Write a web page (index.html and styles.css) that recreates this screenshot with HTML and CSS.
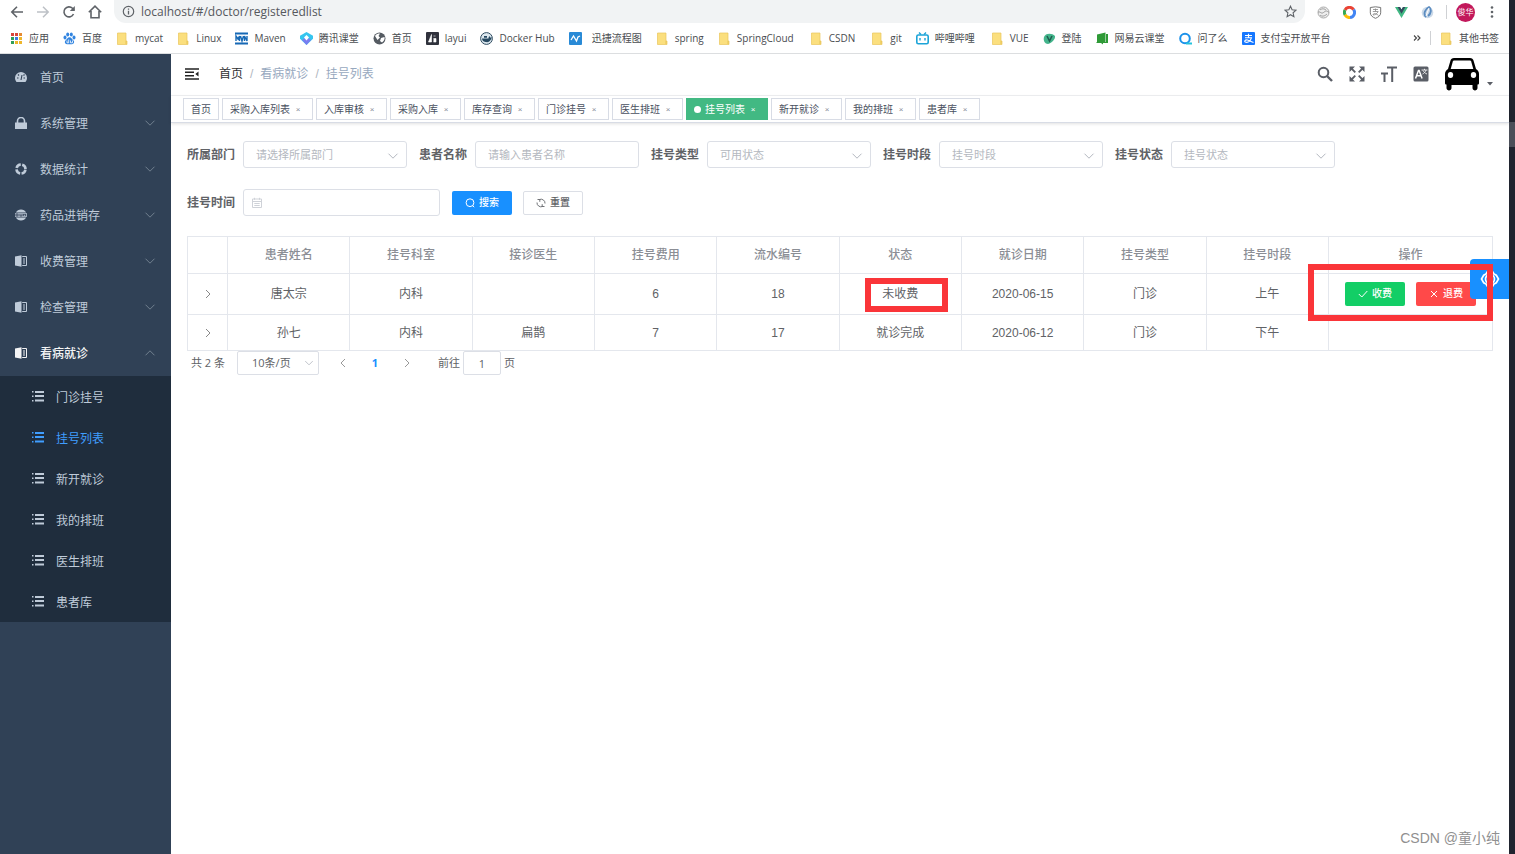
FILE: index.html
```html
<!DOCTYPE html>
<html lang="zh-CN">
<head>
<meta charset="utf-8">
<title>挂号列表</title>
<link rel="stylesheet" href="styles.css">
</head>
<body>
<svg class="sprite" aria-hidden="true">
  <symbol id="folder" viewBox="0 0 13 13"><path d="M1.500 1h8.500v8h1v3.500h-9.500z" fill="#fbdf7e" stroke="#e9c65c" stroke-width=".7"/><path d="M10 9v3" stroke="#e3bc4b" stroke-width=".8"/></symbol>
  <symbol id="down" viewBox="0 0 12 12"><path d="M1.500 3.700 6 8.200l4.500-4.500" fill="none" stroke="currentColor"/></symbol>
  <symbol id="right" viewBox="0 0 12 12"><path d="M4 2l4 4-4 4" fill="none" stroke="currentColor"/></symbol>
  <symbol id="left" viewBox="0 0 12 12"><path d="M8 2 4 6l4 4" fill="none" stroke="currentColor"/></symbol>
  <symbol id="list" viewBox="0 0 12 12"><path d="M0 0h1.500v1.500H0zM0 4.500h1.500V6H0zM0 9h1.500v1.500H0zM3 0h9v2H3zM3 4h9v2H3zM3 8.500h9v2H3z" fill="currentColor"/></symbol>
  <symbol id="book" viewBox="0 0 12 12"><path d="M0 1.500 6.500.2v11.600L0 10.500z" fill="currentColor"/><path d="M7.200 1.500h4.300v9H7.200M8 4h2M8 6h2M8 8h2" fill="none" stroke="currentColor"/></symbol>
</svg>
<div class="screen">
  <div class="browser">
    <header class="toolbar">
      <div class="nav-keys">
        <button class="key" aria-label="后退"><svg viewBox="0 0 14 14"><path d="M13 7H2M7 1.800 1.800 7 7 12.200" fill="none" stroke="#5f6368" stroke-width="1.600"/></svg></button>
        <button class="key" aria-label="前进"><svg viewBox="0 0 14 14"><path d="M1 7h11M7 1.800 12.200 7 7 12.200" fill="none" stroke="#bdc1c6" stroke-width="1.500"/></svg></button>
        <button class="key" aria-label="刷新"><svg viewBox="0 0 14 14"><path d="M11.500 9A5 5 0 1 1 10.500 3.300L12 5" fill="none" stroke="#5f6368" stroke-width="1.600"/><path d="M12.800 1v5H7.800z" fill="#5f6368"/></svg></button>
        <button class="key" aria-label="主页"><svg viewBox="0 0 14 14"><path d="M.800 7.200 7 1.200l6.200 6M3 6v6.800h8V6" fill="none" stroke="#5f6368" stroke-width="1.600"/></svg></button>
      </div>
      <div class="omnibox">
        <svg class="i13" viewBox="0 0 13 13"><circle cx="6.500" cy="6.500" r="5.200" fill="none" stroke="#5f6368" stroke-width="1.200"/><path d="M6.500 5.800v3.700M6.500 3.400v1.300" stroke="#5f6368" stroke-width="1.300"/></svg>
        <input class="url" aria-label="地址" value="localhost/#/doctor/registeredlist">
        <svg class="i13" viewBox="0 0 13 13"><path d="m6.500 1.200 1.600 3.600 3.900.4-2.900 2.600.8 3.900-3.400-2-3.400 2 .8-3.900L1 5.200l3.900-.4z" fill="none" stroke="#5f6368" stroke-width="1.100"/></svg>
      </div>
      <div class="extensions">
        <svg class="i13" viewBox="0 0 13 13"><circle cx="6.500" cy="6.500" r="5.500" fill="#eee" stroke="#aaa"/><path d="M1 6.500c2-2 3 2 5.500 0s3-2 5.500 0M3 4c2-2 5-1 6 0M3 9c2 2 5 1 7-1" fill="none" stroke="#999"/></svg>
        <svg class="i13" viewBox="0 0 13 13"><g fill="none" stroke-width="3"><path d="M2 4a5 5 0 0 1 8.600-.4" stroke="#ea4335"/><path d="M10.600 3.600a5 5 0 0 1-3.600 7.900" stroke="#4285f4"/><path d="M7 11.500A5 5 0 0 1 2 8.700" stroke="#fbbc05"/><path d="M2 8.700A5 5 0 0 1 2 4" stroke="#34a853"/></g></svg>
        <svg class="i13" viewBox="0 0 13 13"><path d="M1.300 1.500 6.500.8l5.200.7v5.300c0 2.700-2.500 4.500-5.200 5.500-2.700-1-5.200-2.800-5.200-5.500z" fill="none" stroke="#777"/><path d="M4 3.500h5M6.500 2.500v3M3.800 5.500h5.400C8 8 6 9 4 9c0-2 3-2 5.500.5" fill="none" stroke="#888" stroke-width=".8"/></svg>
        <svg class="i13" viewBox="0 0 13 13"><path d="M0 1h5l1.500 2.600L8 1h5L6.500 12z" fill="#41b883"/><path d="M2.600 1H5l1.500 2.600L8 1h2.400L6.500 7.800z" fill="#35495e"/></svg>
        <svg class="i13" viewBox="0 0 13 13"><circle cx="6.500" cy="6.500" r="5.800" fill="#cbd9e8"/><path d="M5 11C2 8 4 3 8 1c3 2 2 7-1 9" fill="none" stroke="#5b8cc0" stroke-width="1.800"/><path d="M8 2 5 10" stroke="#fff"/></svg>
      </div>
      <span class="rule"></span>
      <button class="profile">俊华</button>
      <button class="key more" aria-label="更多"><svg viewBox="0 0 14 14"><g fill="#5f6368"><circle cx="7" cy="2.500" r="1.300"/><circle cx="7" cy="7" r="1.300"/><circle cx="7" cy="11.500" r="1.300"/></g></svg></button>
    </header>

    <nav class="bookmarks">
      <a href="#"><svg viewBox="0 0 13 13"><path d="M1 1h3v3H1zM1 5h3v3H1z" fill="#d9453a"/><path d="M5 1h3v3H5z" fill="#d9453a"/><path d="M9 1h3v3H9z" fill="#e58b32"/><path d="M1 5h3v3H1zM1 9h3v3H1z" fill="#2f9e58"/><path d="M5 5h3v3H5z" fill="#3c7be0"/><path d="M5 9h3v3H5zM9 9h3v3H9zM9 5h3v3H9z" fill="#eeb62b"/></svg>应用</a>
      <a href="#"><svg viewBox="0 0 13 13"><g fill="#3184e0"><ellipse cx="2" cy="5.500" rx="1.500" ry="2"/><ellipse cx="4.700" cy="2.500" rx="1.500" ry="2"/><ellipse cx="8.300" cy="2.500" rx="1.500" ry="2"/><ellipse cx="11" cy="5.500" rx="1.500" ry="2"/><path d="M6.500 5.300c2 0 2.500 2 4 3.300 1.300 1.300.5 3.700-1.500 3.700H4c-2 0-2.800-2.400-1.500-3.700C4 7.300 4.500 5.300 6.500 5.300z"/></g><path d="M4 8.500v2.300h1.700V7.500M7.500 8.500v2.300h2V8.500" fill="none" stroke="#fff" stroke-width=".8"/></svg>百度</a>
      <a href="#"><svg><use href="#folder"/></svg>mycat</a>
      <a href="#"><svg><use href="#folder"/></svg>Linux</a>
      <a href="#"><svg viewBox="0 0 13 13"><path d="M0 .5h13v2H0zM0 10.500h13v2H0z" fill="#1769b5"/><path d="M1 9V4l2 3 1.500-3v5M5.500 4 7 9l1.500-5M9.500 9V4L12 9V4" fill="none" stroke="#1769b5" stroke-width="1.400"/></svg>Maven</a>
      <a href="#"><svg viewBox="0 0 13 13"><path d="M6.500 0 13 3.800v3L6.500 13 0 6.800v-3z" fill="#35c5ef"/><path d="m2 8 4.500-3L11 8l-4.500 5z" fill="#7a7df0"/><path d="M6.500 3 9 5.500l-2.500 3L4 5.500z" fill="#fff"/></svg>腾讯课堂</a>
      <a href="#"><svg viewBox="0 0 13 13"><circle cx="6.500" cy="6.500" r="6" fill="#555b62"/><path d="M2 4c1-2 3-2.500 5-2.500L5.500 4 7 5.500 4.500 8zM8 6l3.500-1c.5 2-.5 4-2.500 5.500L7 9z" fill="#fff"/></svg>首页</a>
      <a href="#"><svg viewBox="0 0 13 13"><rect width="13" height="13" rx="1" fill="#30323c"/><path d="M2.500 10h3V2.500zM7.500 10h2.500V6.500H7.500M7.500 4h2" fill="#fff" stroke="#fff" stroke-width=".6"/></svg>layui</a>
      <a href="#"><svg viewBox="0 0 13 13"><circle cx="6.500" cy="6.500" r="5.900" fill="#dce7ee" stroke="#304c60"/><path d="M2 6.500h6.500c0-1.200.5-2 1-2.500l.7 1.500H12C10 10 8 10.500 5.500 10 3 9.500 2 8 2 6.500zM4 4h3v1.700H4z" fill="#274961"/></svg>Docker Hub</a>
      <a class="roomy" href="#"><svg viewBox="0 0 13 13"><rect width="13" height="13" rx="1" fill="#298ad6"/><path d="m2 8 2.500-4 3 5L9 5l2-1" fill="none" stroke="#fff" stroke-width="1.300"/></svg>迅捷流程图</a>
      <a href="#"><svg><use href="#folder"/></svg>spring</a>
      <a href="#"><svg><use href="#folder"/></svg>SpringCloud</a>
      <a class="apart" href="#"><svg><use href="#folder"/></svg>CSDN</a>
      <a class="apart" href="#"><svg><use href="#folder"/></svg>git</a>
      <a href="#"><svg viewBox="0 0 13 13"><rect x=".8" y="3" width="11.400" height="8.700" rx="1.500" fill="#fff" stroke="#1ca4d8" stroke-width="1.600"/><path d="m3 .5 2 2M10 .5l-2 2M4 6v2.500M9 6v2.500" stroke="#1ca4d8" stroke-width="1.400"/></svg>哔哩哔哩</a>
      <a class="apart" href="#"><svg><use href="#folder"/></svg>VUE</a>
      <a href="#"><svg viewBox="0 0 13 13"><path d="M1 5c1-4 8-4.500 11-1 .5 3-3 7-7 8C2 12 0 9 1 5z" fill="#43b48b"/><path d="m4 4 2.500 5L9 4" fill="none" stroke="#205f50" stroke-width="1.600"/></svg>登陆</a>
      <a href="#"><svg viewBox="0 0 13 13"><path d="M1 2.500 9.500.5v9.500L1 10zM10 2h2v9H7v1.500L5 11H.5v-1h9.500z" fill="#2f9a37"/></svg>网易云课堂</a>
      <a href="#"><svg viewBox="0 0 13 13"><circle cx="6" cy="6.500" r="4.800" fill="none" stroke="#1b91ea" stroke-width="2"/><path d="M7 11.500h6" stroke="#25c3dd" stroke-width="2"/></svg>问了么</a>
      <a href="#"><svg viewBox="0 0 13 13"><rect width="13" height="13" rx="1" fill="#1677ff"/><path d="M3 3.500h7M6.500 1.800v4M3 5.700h6.500C8.500 9 6 10.500 4 10.300 1.500 9.800 3 7.500 5.500 8c2 .5 4 2 6 2.500" fill="none" stroke="#fff" stroke-width="1.100"/></svg>支付宝开放平台</a>
      <span class="spacer"></span>
      <button class="overflow" aria-label="更多书签"><svg viewBox="0 0 8 8"><path d="m1 1.500 2.500 2.500L1 6.500M4.500 1.500 7 4 4.500 6.500" fill="none" stroke="#444" stroke-width="1.100"/></svg></button>
      <span class="rule"></span>
      <a href="#"><svg><use href="#folder"/></svg>其他书签</a>
    </nav>

    <div class="app">
      <aside class="sidebar">
        <a class="item" href="#"><svg class="ico" viewBox="0 0 12 12"><path d="M1.500 11A6 6 0 1 1 10.500 11z" fill="currentColor"/><path d="m6 9 1-5M2 7h1.500M8.500 7H10M3 3.500l1 1M8.500 4.500l1-1" stroke="#304156" stroke-width="1.100"/></svg><span>首页</span></a>
        <a class="item" href="#"><svg class="ico" viewBox="0 0 12 12"><path d="M0 5.500h12V12H0z" fill="currentColor"/><path d="M2.500 6V4a3.500 3.500 0 0 1 7 0v2" fill="none" stroke="currentColor" stroke-width="1.600"/></svg><span>系统管理</span><svg class="arrow"><use href="#down"/></svg></a>
        <a class="item" href="#"><svg class="ico" viewBox="0 0 12 12"><circle cx="6" cy="6" r="4.500" fill="none" stroke="currentColor" stroke-width="2.600" stroke-dasharray="5.600 1.469" stroke-dashoffset="-.7"/></svg><span>数据统计</span><svg class="arrow"><use href="#down"/></svg></a>
        <a class="item" href="#"><svg class="ico" viewBox="0 0 12 12"><path d="M.8 3.500a6 6 0 0 1 10.400 0zM.8 8.500a6 6 0 0 0 10.400 0z" fill="currentColor"/><path d="M0 4h12v4H0z" fill="currentColor" opacity=".75"/><path d="M1 7V5h2v2H1M5 5v2h2V5M8.500 7V5l1 1 1-1v2" fill="none" stroke="#304156" stroke-width=".7"/></svg><span>药品进销存</span><svg class="arrow"><use href="#down"/></svg></a>
        <a class="item" href="#"><svg class="ico"><use href="#book"/></svg><span>收费管理</span><svg class="arrow"><use href="#down"/></svg></a>
        <a class="item" href="#"><svg class="ico"><use href="#book"/></svg><span>检查管理</span><svg class="arrow"><use href="#down"/></svg></a>
        <a class="item open" href="#"><svg class="ico"><use href="#book"/></svg><span>看病就诊</span><svg class="arrow"><use href="#down"/></svg></a>
        <div class="submenu">
          <a class="sub" href="#"><svg class="ico"><use href="#list"/></svg><span>门诊挂号</span></a>
          <a class="sub current" href="#"><svg class="ico"><use href="#list"/></svg><span>挂号列表</span></a>
          <a class="sub" href="#"><svg class="ico"><use href="#list"/></svg><span>新开就诊</span></a>
          <a class="sub" href="#"><svg class="ico"><use href="#list"/></svg><span>我的排班</span></a>
          <a class="sub" href="#"><svg class="ico"><use href="#list"/></svg><span>医生排班</span></a>
          <a class="sub" href="#"><svg class="ico"><use href="#list"/></svg><span>患者库</span></a>
        </div>
      </aside>

      <div class="main">
        <div class="navbar">
          <button class="burger" aria-label="折叠菜单"><svg viewBox="0 0 14 12"><path d="M0 1h14M0 4.300h9M0 7.700h9M0 11h14" stroke="#222" stroke-width="1.400"/><path d="m13.500 3.500v5L10.300 6z" fill="#222"/></svg></button>
          <nav class="crumbs"><a class="home" href="#">首页</a><i>/</i><span>看病就诊</span><i>/</i><span>挂号列表</span></nav>
          <div class="tools">
            <button aria-label="搜索"><svg viewBox="0 0 16 16"><circle cx="6.500" cy="6.500" r="4.800" fill="none" stroke="#5a5e66" stroke-width="2"/><path d="m10 10 5 5" stroke="#5a5e66" stroke-width="2.400"/></svg></button>
            <button aria-label="全屏"><svg viewBox="0 0 16 16"><path d="M.5.500H6L.5 6zM15.500.5V6L10 .5zM.5 15.500V10L6 15.500zM15.500 15.500H10l5.500-5.500z" fill="#5a5e66"/><path d="m2 2 4.300 4.300M14 2 9.700 6.300M2 14l4.300-4.300M14 14 9.700 9.700" stroke="#5a5e66" stroke-width="1.800"/></svg></button>
            <button aria-label="字号"><svg viewBox="0 0 16 16"><path d="M6 1.500h10M11.200 1.500V16M0 7.500h7M3.500 7.500V16" fill="none" stroke="#5a5e66" stroke-width="2"/></svg></button>
            <button aria-label="语言"><svg viewBox="0 0 16 16"><rect x=".5" y=".5" width="15" height="15" rx="1.500" fill="#5a5e66"/><path d="m2.500 12.500 3-8h.6l3 8M3.500 9.800h4.500" fill="none" stroke="#fff" stroke-width="1.500"/><path d="M8.500 4h6M11.500 2.800V4M13 4c-.5 2-2 3.300-3.500 4M10 4.500c.8 1.600 2.400 3 4 3.500" fill="none" stroke="#fff" stroke-width=".8"/></svg></button>
            <button class="avatar" aria-label="用户菜单"><svg class="car" viewBox="0 0 34 34"><path d="M9 1h16c2 0 3 1 3.500 2.500L31 12c2 1 3 3 3 5v9c0 1-.5 1.500-1.500 1.500V31c0 3.300-5 3.300-5 0v-3h-21v3c0 3.300-5 3.300-5 0v-3.500C.5 27.500 0 27 0 26v-9c0-2 1-4 3-5l2.500-8.500C6 2 7 1 9 1z"/><path d="M9 3.500h16c.6 0 1 .3 1.200 1L28.300 12H5.700l2.100-7.500c.2-.7.600-1 1.200-1z" fill="#fff"/><ellipse cx="5.500" cy="18" rx="2.700" ry="3" fill="#fff"/><ellipse cx="28.500" cy="18" rx="2.700" ry="3" fill="#fff"/></svg><svg class="caret" viewBox="0 0 6 4"><path d="M0 0h6L3 3.500z" fill="#5a5e66"/></svg></button>
          </div>
        </div>

        <div class="tabs">
          <a class="tab" href="#">首页</a>
          <a class="tab" href="#">采购入库列表<b>×</b></a>
          <a class="tab" href="#">入库审核<b>×</b></a>
          <a class="tab" href="#">采购入库<b>×</b></a>
          <a class="tab" href="#">库存查询<b>×</b></a>
          <a class="tab" href="#">门诊挂号<b>×</b></a>
          <a class="tab" href="#">医生排班<b>×</b></a>
          <a class="tab active" href="#">挂号列表<b>×</b></a>
          <a class="tab" href="#">新开就诊<b>×</b></a>
          <a class="tab" href="#">我的排班<b>×</b></a>
          <a class="tab" href="#">患者库<b>×</b></a>
        </div>

        <main class="content">
          <form class="filters">
            <div class="field"><label for="dept">所属部门</label><div class="control"><select id="dept"><option>请选择所属部门</option></select><svg><use href="#down"/></svg></div></div>
            <div class="field"><label for="name">患者名称</label><div class="control"><input id="name" placeholder="请输入患者名称"></div></div>
            <div class="field"><label for="type">挂号类型</label><div class="control"><select id="type"><option>可用状态</option></select><svg><use href="#down"/></svg></div></div>
            <div class="field"><label for="slot">挂号时段</label><div class="control"><select id="slot"><option>挂号时段</option></select><svg><use href="#down"/></svg></div></div>
            <div class="field"><label for="state">挂号状态</label><div class="control"><select id="state"><option>挂号状态</option></select><svg><use href="#down"/></svg></div></div>
            <div class="field"><label for="date">挂号时间</label><div class="control wide"><input id="date" type="text"><svg class="cal" viewBox="0 0 12 12"><path d="M1.500 2h9v8.500h-9zM1.500 4.500h9M3.500.8v2M8.500.8v2M3.300 6.500h5.400M3.300 8.500h5.400" fill="none" stroke="currentColor"/></svg></div></div>
            <div class="actions">
              <button type="button" class="btn primary"><svg viewBox="0 0 10 10"><circle cx="5" cy="4.700" r="3.900" fill="none" stroke="currentColor"/><path d="m7.500 7.500 1.700 1.700" stroke="currentColor"/></svg>搜索</button>
              <button type="button" class="btn plain"><svg viewBox="0 0 10 10"><path d="M3.500 1.500A4 4 0 0 1 9 5.500M1 4.500a4 4 0 0 0 5.500 4M1.500 1.500h2.300v2.300M8.500 8.500H6.200V6.200" fill="none" stroke="currentColor" stroke-width=".9"/></svg>重置</button>
            </div>
          </form>

          <table class="grid">
            <colgroup><col class="c-expand"><col span="9"><col class="c-ops"></colgroup>
            <thead><tr><th></th><th>患者姓名</th><th>挂号科室</th><th>接诊医生</th><th>挂号费用</th><th>流水编号</th><th>状态</th><th>就诊日期</th><th>挂号类型</th><th>挂号时段</th><th>操作</th></tr></thead>
            <tbody>
              <tr class="tall"><td><button class="expand" aria-label="展开"><svg><use href="#right"/></svg></button></td><td>唐太宗</td><td>内科</td><td></td><td>6</td><td>18</td><td class="marked">未收费<span class="mark mark-state"></span></td><td>2020-06-15</td><td>门诊</td><td>上午</td><td class="marked"><div class="ops"><button class="btn success"><svg viewBox="0 0 10 10"><path d="m.8 5 3 3 5.500-6" fill="none" stroke="currentColor"/></svg>收费</button><button class="btn danger"><svg viewBox="0 0 10 10"><path d="m2 2 6 6M8 2 2 8" stroke="currentColor"/></svg>退费</button></div><span class="mark mark-ops"></span></td></tr>
              <tr><td><button class="expand" aria-label="展开"><svg><use href="#right"/></svg></button></td><td>孙七</td><td>内科</td><td>扁鹊</td><td>7</td><td>17</td><td>就诊完成</td><td>2020-06-12</td><td>门诊</td><td>下午</td><td></td></tr>
            </tbody>
          </table>

          <div class="pager">
            <span>共 2 条</span>
            <div class="size"><select aria-label="每页条数"><option>10条/页</option></select><svg><use href="#down"/></svg></div>
            <button class="step" aria-label="上一页"><svg><use href="#left"/></svg></button>
            <button class="page">1</button>
            <button class="step" aria-label="下一页"><svg><use href="#right"/></svg></button>
            <label class="jump">前往<input value="1">页</label>
          </div>
        </main>
        <button class="settings" aria-label="设置"><svg viewBox="0 0 20 20"><path d="M7.500 2.500C9 1 11 1 12.500 2.500L14 5l2.300 1.200L18.500 10l-2.200 3.800L14 15l-1.500 2.500C11 19 9 19 7.500 17.500L6 15l-2.300-1.200L1.500 10l2.200-3.800L6 5z" fill="none" stroke="#fff" stroke-width="1.700"/><circle cx="10" cy="10" r="4.500" fill="none" stroke="#fff" stroke-width="1.700"/></svg></button>
        <div class="watermark">CSDN @童小纯</div>
      </div>
    </div>
  </div>
  <div class="edge"><span></span></div>
</div>
</body>
</html>
```
FILE: styles.css
```css
* { box-sizing: border-box; }
body { margin: 0; font: 12px/16px "Liberation Sans", "Noto Sans CJK SC", sans-serif; color: #606266; background: #fff; }
a { color: inherit; text-decoration: none; }
button { font: inherit; color: inherit; border: 0; padding: 0; background: none; cursor: pointer; }
input, select { font: inherit; color: inherit; }
svg { display: block; flex: none; }
.sprite { display: none; }

.screen { display: flex; min-height: 100vh; }
.browser { flex: 1; min-width: 0; display: flex; flex-direction: column; }
.edge { width: 6px; background: #20242f; padding-top: 122px; }
.edge span { display: block; height: 25px; background: #4b4f59; }

/* browser chrome */
.toolbar { display: flex; align-items: center; height: 24px; padding: 0 10px; }
.nav-keys { display: flex; gap: 12px; }
.key svg { width: 14px; height: 14px; }
.i13 { width: 13px; height: 13px; }
.omnibox { flex: 1; display: flex; align-items: center; gap: 6px; height: 23px; margin: 0 12px 1px 12px; padding: 0 8px; background: #f1f3f4; border-radius: 0 0 12px 12px; }
.url { flex: 1; border: 0; padding: 0; background: none; outline: 0; color: #55585d; font: 12px/16px "Open Sans", sans-serif; }
.extensions { display: flex; gap: 13px; }
.rule { width: 1px; height: 14px; background: #cfd1d4; margin: 0 9px 0 12px; }
.profile { width: 19px; height: 19px; border-radius: 50%; background: #c2185b; color: #fff; font-size: 8px; line-height: 19px; }
.more { margin-left: 10px; }

.bookmarks { display: flex; align-items: center; gap: 14px; height: 30px; padding: 0 10px 1px; border-bottom: 1px solid #dcdee0; white-space: nowrap; color: #4a4d51; font: 10px/16px "Open Sans", "Noto Sans CJK SC", sans-serif; }
.bookmarks a { display: flex; align-items: center; gap: 6px; }
.bookmarks a svg { width: 13px; height: 13px; }
.bookmarks .roomy { gap: 10px; }
.bookmarks .apart { margin-left: 2px; }
.bookmarks .rule { margin: 0 -5px; }
.spacer { flex: 1; }
.overflow svg { width: 8px; height: 8px; }

/* sidebar */
.app { flex: 1; display: flex; }
.sidebar { width: 171px; flex: none; background: #304156; color: #bfcbd9; }
.item { display: flex; align-items: center; height: 46px; padding: 0 15px; gap: 13px; }
.item span, .sub span { padding-top: 2px; }
.ico { width: 12px; height: 12px; }
.arrow { width: 12px; height: 12px; margin-left: auto; color: #71808f; }
.open { color: #f4f4f5; font-weight: 500; }
.open .arrow { transform: rotate(180deg); }
.submenu { background: #1f2d3d; }
.sub { display: flex; align-items: center; height: 41px; padding-left: 32px; gap: 12px; }
.current { color: #409eff; }

/* header */
.main { flex: 1; min-width: 0; position: relative; }
.navbar { display: flex; align-items: center; height: 42px; padding: 0 16px 2px 14px; border-bottom: 1px solid #f0f1f3; }
.burger svg { width: 14px; height: 12px; }
.crumbs { display: flex; margin-left: 20px; color: #97a8be; }
.crumbs .home { color: #303133; }
.crumbs i { margin: 0 7px; color: #b0b6c0; font-style: normal; }
.tools { display: flex; align-items: center; gap: 16px; margin-left: auto; }
.tools svg { width: 16px; height: 16px; }
.tools .avatar { display: flex; align-items: flex-end; gap: 8px; }
.tools .car { width: 34px; height: 34px; }
.tools .caret { width: 6px; height: 4px; margin-bottom: 5px; }

.tabs { display: flex; align-items: center; gap: 3px; height: 27px; padding: 0 12px; border-bottom: 1px solid #d8dce5; box-shadow: 0 1px 3px rgba(0, 0, 0, .12); }
.tab { display: flex; align-items: center; height: 22px; padding: 1px 7px 0 7px; border: 1px solid #d8dce5; color: #495060; font-size: 10px; white-space: nowrap; }
.tab b { width: 15px; padding-left: 1px; text-align: center; font-size: 8px; font-weight: 400; color: #888e99; }
.tab.active { background: #42b983; border-color: #42b983; color: #fff; }
.tab.active b { color: #fff; }
.tab.active::before { content: ""; width: 7px; height: 7px; margin-right: 4px; border-radius: 50%; background: #fff; }

/* filters */
.content { padding: 18px 16px; }
.filters { display: flex; flex-wrap: wrap; gap: 21px 12px; margin-bottom: 20px; }
.field { display: flex; align-items: center; gap: 8px; }
.field label { font-weight: 700; white-space: nowrap; }
.control { position: relative; width: 164px; }
.control.wide { width: 197px; }
.control input, .control select { display: block; width: 100%; height: 27px; padding: 0 12px; border: 1px solid #dcdfe6; border-radius: 3px; background: #fff; font-size: 11px; color: #b4b8c0; appearance: none; outline: 0; }
.control input::placeholder { color: #b4b8c0; opacity: 1; }
.control svg { position: absolute; right: 8px; top: 9px; width: 12px; height: 12px; color: #b4b8c0; pointer-events: none; }
.control .cal { left: 8px; top: 8px; color: #cfd2d8; }
.actions { display: flex; align-items: center; gap: 11px; }
.btn { display: flex; align-items: center; justify-content: center; gap: 4px; width: 60px; height: 24px; border-radius: 2px; font-size: 10px; font-weight: 500; color: #fff; }
.btn svg { width: 10px; height: 10px; }
.primary { background: #1890ff; }
.plain { border: 1px solid #dcdfe6; color: #606266; }
.success { background: #13ce66; }
.danger { background: #ff4949; }

/* table */
.grid { width: 100%; table-layout: fixed; border-collapse: collapse; text-align: center; }
.grid th, .grid td { padding: 0; height: 36px; border: 1px solid #e4e7ed; }
.grid th { height: 37px; color: #8b8e95; font-weight: 500; }
.grid .tall td { height: 41px; }
.c-expand { width: 40px; }
.c-ops { width: 164px; }
.expand { display: block; margin: 0 auto; }
.expand svg { width: 12px; height: 12px; color: #888; }
.ops { display: flex; justify-content: center; gap: 11px; }
.marked { position: relative; }
.mark { position: absolute; z-index: 3; border: 6px solid #fa3539; pointer-events: none; }
.mark-state { left: 25px; top: 4px; width: 83px; height: 34px; }
.mark-ops { left: -21px; right: -1px; top: -10px; bottom: -7px; }

.pager { display: flex; align-items: center; padding-left: 4px; font: 11px/16px "Open Sans", "Noto Sans CJK SC", sans-serif; }
.size { position: relative; margin: 0 18px 0 12px; }
.size select { display: block; width: 82px; height: 24px; padding: 0 14px; border: 1px solid #dcdfe6; border-radius: 2px; background: #fff; appearance: none; }
.size svg { position: absolute; right: 5px; top: 7px; width: 10px; height: 10px; color: #b4b8c0; }
.step svg { width: 12px; height: 12px; color: #999; }
.page { width: 52px; color: #1890ff; font-weight: 700; }
.jump { display: flex; align-items: center; gap: 3px; margin-left: 25px; }
.jump input { width: 38px; height: 24px; padding: 0; border: 1px solid #dcdfe6; border-radius: 2px; text-align: center; }

.settings { position: absolute; z-index: 2; right: 0; top: 205px; width: 39px; height: 40px; border-radius: 4px 0 0 4px; background: #1890ff; }
.settings svg { width: 20px; height: 20px; margin: 0 auto; }
.watermark { position: absolute; right: 9px; bottom: 6px; font-size: 14px; line-height: 20px; color: #909090; }
```
